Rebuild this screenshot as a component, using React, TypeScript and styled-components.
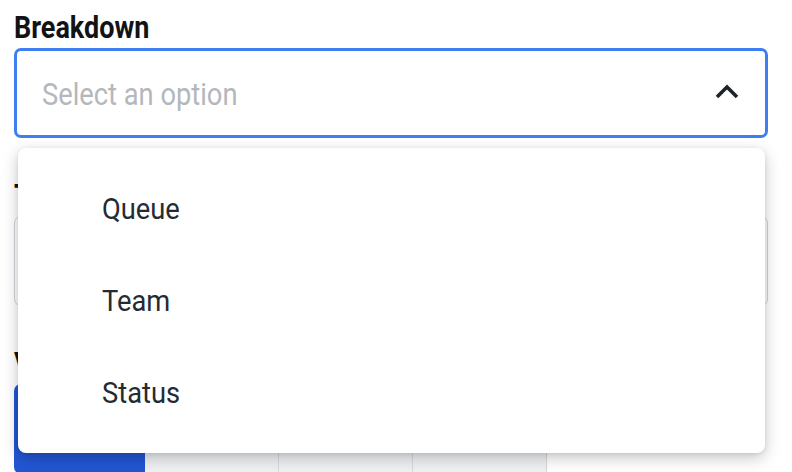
import React, { useState } from 'react';
import styled, { createGlobalStyle } from 'styled-components';

const GlobalStyle = createGlobalStyle`
  html, body {
    margin: 0;
    padding: 0;
    background: #ffffff;
    overflow: hidden;
  }
  body {
    font-family: Roboto, "Noto Sans", "Liberation Sans", sans-serif;
    -webkit-font-smoothing: antialiased;
  }
`;

const Page = styled.div`
  width: 792px;
  height: 472px;
  box-sizing: border-box;
  padding: 10px 24px 0 14px;
  overflow: hidden;
`;

const Field = styled.div`
  position: relative;
  margin-bottom: 40px;
`;

const Label = styled.div`
  height: 36px;
  margin-bottom: 2px;
  font-size: 31px;
  line-height: 36px;
  font-weight: 700;
  color: #111315;
  white-space: nowrap;
`;

/* the screenshot text is narrow; squeeze Roboto to match */
const Narrow = styled.span<{ $x?: number }>`
  display: inline-block;
  transform: scaleX(${(p) => p.$x ?? 0.87});
  transform-origin: left center;
`;

const SelectBox = styled.div<{ $open?: boolean }>`
  height: 90px;
  box-sizing: border-box;
  border: ${(p) => (p.$open ? '3px solid #3d7ef0' : '1px solid #cfd3d8')};
  border-radius: 7px;
  display: flex;
  align-items: center;
  justify-content: space-between;
  padding: 0 26px 0 ${(p) => (p.$open ? '25px' : '27px')};
  background: #fff;
  cursor: pointer;
`;

const Placeholder = styled.span`
  margin-top: 3px;
  font-size: 31px;
  color: #b4b7bc;
  white-space: nowrap;
`;

const Chevron = styled.svg`
  width: 24px;
  height: 16px;
  margin-top: -4px;
  flex-shrink: 0;
`;

const Menu = styled.div`
  position: absolute;
  top: calc(100% + 10px);
  left: 4px;
  right: 3px;
  z-index: 10;
  background: #fff;
  border-radius: 8px;
  padding: 14px 0 15px;
  box-shadow: 0 5px 16px rgba(0, 0, 0, 0.22), 0 1px 4px rgba(0, 0, 0, 0.08);
`;

const MenuItem = styled.div`
  height: 92px;
  display: flex;
  align-items: center;
  padding-left: 84px;
  font-size: 30px;
  color: #262b33;
  cursor: pointer;

  &:hover {
    background: #f5f7fa;
  }
`;

const Segments = styled.div`
  display: flex;
  height: 90px;
  border-radius: 7px;
  overflow: hidden;
  width: 540px;
`;

const Segment = styled.button<{ $active?: boolean }>`
  width: 134px;
  height: 90px;
  border: none;
  border-right: 1px solid #d6d9dd;
  background: ${(p) => (p.$active ? '#2356d3' : '#eff0f2')};
  color: ${(p) => (p.$active ? '#fff' : '#30343a')};
  font-family: inherit;
  font-size: 26px;
  &:first-child {
    width: 131px;
    border-right: none;
  }
`;

const options = ['Queue', 'Team', 'Status'];

export default function App() {
  const [open, setOpen] = useState(true);

  return (
    <>
      <GlobalStyle />
      <Page>
        <Field>
          <Label>
            <Narrow>Breakdown</Narrow>
          </Label>
          <SelectBox $open={open} onClick={() => setOpen(!open)}>
            <Placeholder>
              <Narrow $x={0.88}>Select an option</Narrow>
            </Placeholder>
            <Chevron viewBox="0 0 24 16">
              <polyline
                points="2,14 12,4 22,14"
                fill="none"
                stroke="#1f2329"
                strokeWidth="3.6"
                strokeLinejoin="miter"
              />
            </Chevron>
          </SelectBox>
          {open && (
            <Menu>
              {options.map((o) => (
                <MenuItem key={o} onClick={() => setOpen(false)}>
                  <Narrow $x={0.91}>{o}</Narrow>
                </MenuItem>
              ))}
            </Menu>
          )}
        </Field>

        <Field>
          <Label>
            <Narrow>Type</Narrow>
          </Label>
          <SelectBox>
            <Placeholder>
              <Narrow $x={0.88}>All types</Narrow>
            </Placeholder>
          </SelectBox>
        </Field>

        <Field>
          <Label>
            <Narrow>View</Narrow>
          </Label>
          <Segments>
            <Segment $active>Table</Segment>
            <Segment>Bar</Segment>
            <Segment>Line</Segment>
            <Segment>Pie</Segment>
          </Segments>
        </Field>
      </Page>
    </>
  );
}
